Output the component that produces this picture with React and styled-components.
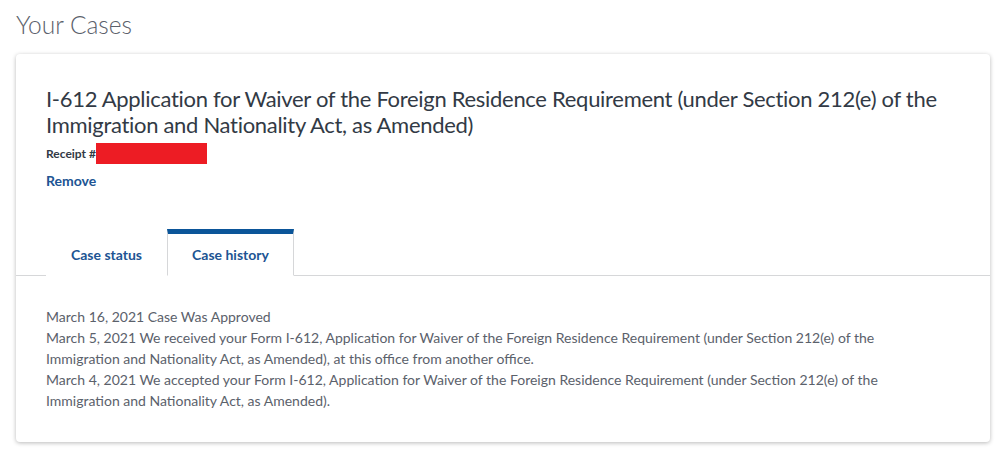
import React from 'react';
import styled, { createGlobalStyle } from 'styled-components';

const GlobalStyle = createGlobalStyle`
    body {
        margin: 0;
        background: #ffffff;
        font-family: Lato, 'Open Sans', sans-serif;
    }
`;

const history = [
    { date: 'March 16, 2021', text: 'Case Was Approved' },
    {
        date: 'March 5, 2021',
        text: 'We received your Form I-612, Application for Waiver of the Foreign Residence Requirement (under Section 212(e) of the Immigration and Nationality Act, as Amended), at this office from another office.',
    },
    {
        date: 'March 4, 2021',
        text: 'We accepted your Form I-612, Application for Waiver of the Foreign Residence Requirement (under Section 212(e) of the Immigration and Nationality Act, as Amended).',
    },
];

const App = () => {
    return (
        <Page>
            <GlobalStyle />
            <PageTitle>Your Cases</PageTitle>
            <Card>
                <CardHeader>
                    <CaseTitle>
                        I-612 Application for Waiver of the Foreign Residence Requirement (under Section 212(e) of the
                        Immigration and Nationality Act, as Amended)
                    </CaseTitle>
                    <Receipt>
                        Receipt #<Redacted />
                    </Receipt>
                    <RemoveLink href='#'>Remove</RemoveLink>
                </CardHeader>

                <TabBar>
                    <Tab>Case status</Tab>
                    <Tab active>Case history</Tab>
                </TabBar>

                <HistoryPanel>
                    {history.map(item => (
                        <HistoryItem key={item.date}>{`${item.date} ${item.text}`}</HistoryItem>
                    ))}
                </HistoryPanel>
            </Card>
        </Page>
    );
};

export default App;

const Page = styled.div`
    padding: 8px 10px 20px 16px;
`;

const PageTitle = styled.h1`
    margin: 0;
    font-size: 24.5px;
    font-weight: 300;
    line-height: 34px;
    color: #5b616b;
`;

const Card = styled.div`
    margin-top: 12px;
    background: #ffffff;
    border-radius: 4px;
    box-shadow: 0 1px 4px rgba(0, 0, 0, 0.28);
`;

const CardHeader = styled.div`
    display: flex;
    flex-direction: column;
    align-items: flex-start;
    padding: 32px 30px 0;
`;

const CaseTitle = styled.h2`
    margin: 0;
    font-size: 22px;
    font-weight: 400;
    line-height: 26px;
    letter-spacing: -0.3px;
    color: #323a45;
`;

const Receipt = styled.div`
    display: flex;
    align-items: center;
    margin-top: 5px;
    font-size: 12px;
    font-weight: 700;
    color: #323a45;
`;

const Redacted = styled.span`
    display: inline-block;
    width: 111px;
    height: 21px;
    background: #ed1c24;
`;

const RemoveLink = styled.a`
    margin-top: 8px;
    font-size: 14px;
    font-weight: 700;
    color: #205493;
    text-decoration: none;
`;

const TabBar = styled.div`
    display: flex;
    align-items: flex-end;
    margin-top: 40px;
    padding-left: 30px;
    border-bottom: 1px solid #d6d7d9;
`;

const Tab = styled.div`
    box-sizing: border-box;
    height: 47px;
    margin-bottom: -1px;
    padding: 0 24px;
    display: flex;
    align-items: center;
    font-size: 14px;
    font-weight: 700;
    color: #205493;
    background: #ffffff;
    border: 1px solid ${props => (props.active ? '#d6d7d9' : 'transparent')};
    border-top: 5px solid ${props => (props.active ? '#0b5599' : 'transparent')};
    border-bottom: 1px solid ${props => (props.active ? '#ffffff' : 'transparent')};
`;

const HistoryPanel = styled.div`
    padding: 30px 30px 31px;
    max-width: 850px;
`;

const HistoryItem = styled.p`
    margin: 0;
    font-size: 14px;
    line-height: 21px;
    color: #5b616b;
`;
